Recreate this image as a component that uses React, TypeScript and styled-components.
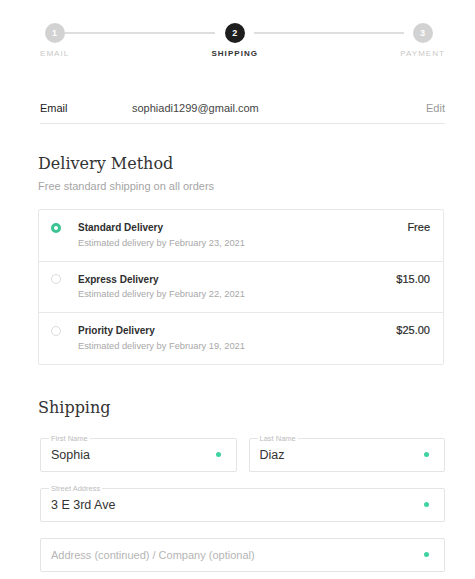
import React from "react";
import { styled, createGlobalStyle } from "styled-components";

const GlobalStyle = createGlobalStyle`
  body {
    margin: 0;
    background: #fff;
    font-family: "Liberation Sans", Arial, sans-serif;
    color: #222;
  }
`;

const Page = styled.div`
  width: 475px;
  box-sizing: border-box;
  padding: 23px 30px 0 38px;
`;

const Stepper = styled.div`
  display: flex;
  align-items: flex-start;
  padding-left: 2px;
`;

const Step = styled.div`
  display: flex;
  flex-direction: column;
  align-items: center;
  position: relative;
  z-index: 1;
`;

const StepCircle = styled.div<{ $active?: boolean }>`
  width: 20px;
  height: 20px;
  border-radius: 50%;
  background: ${(p) => (p.$active ? "#1e1e1e" : "#d2d2d2")};
  color: #fff;
  font-size: 9px;
  font-weight: 700;
  display: flex;
  align-items: center;
  justify-content: center;
`;

const StepLabel = styled.div<{ $active?: boolean }>`
  margin-top: 6px;
  font-size: 8px;
  line-height: 10px;
  letter-spacing: 1.05px;
  text-transform: uppercase;
  font-weight: ${(p) => (p.$active ? 700 : 400)};
  color: ${(p) => (p.$active ? "#333" : "#c9c9c9")};
`;

const Connector = styled.div`
  flex: 1;
  height: 2px;
  margin: 9px -4px 0;
  background: #dedede;
`;

const EmailRow = styled.div`
  display: flex;
  align-items: center;
  margin: 42px 0 0 2px;
  padding-bottom: 8px;
  border-bottom: 1px solid #e6e6e6;
  font-size: 11px;
  line-height: 14px;
`;

const EmailKey = styled.span`
  width: 92px;
  color: #222;
`;

const EmailValue = styled.span`
  flex: 1;
  color: #444;
`;

const EditLink = styled.span`
  color: #999;
`;

const SectionTitle = styled.h2<{ $gap: number }>`
  margin: ${(p) => p.$gap}px 0 0;
  font-family: "DejaVu Serif", Georgia, serif;
  font-weight: 400;
  font-size: 16px;
  line-height: 20px;
  color: #333;
`;

const SectionNote = styled.p`
  margin: 5px 0 0;
  font-size: 11px;
  line-height: 14px;
  color: #a5a5a5;
`;

const OptionCard = styled.div`
  margin: 16px 1px 0 0;
  border: 1px solid #e8e8e8;
  border-radius: 2px;
`;

const Option = styled.div`
  display: flex;
  align-items: flex-start;
  padding: 11px 13px 12px 12px;
  & + & {
    border-top: 1px solid #e8e8e8;
  }
`;

const Radio = styled.span<{ $checked?: boolean }>`
  width: 10px;
  height: 10px;
  box-sizing: border-box;
  border-radius: 50%;
  margin-top: 1.5px;
  border: ${(p) => (p.$checked ? "3px solid #3cc394" : "1px solid #dcdcdc")};
  background: #fff;
  flex-shrink: 0;
`;

const OptionText = styled.div`
  flex: 1;
  margin-left: 17px;
  display: flex;
  flex-direction: column;
  gap: 2.5px;
`;

const OptionName = styled.span`
  font-size: 10px;
  line-height: 13px;
  font-weight: 700;
  color: #2e2e2e;
`;

const OptionEta = styled.span`
  font-size: 9.3px;
  line-height: 12px;
  color: #a8a8a8;
`;

const OptionPrice = styled.span`
  font-size: 11px;
  line-height: 13px;
  color: #2a2a2a;
  -webkit-text-stroke: 0.2px #2a2a2a;
`;

const Fields = styled.div`
  margin: 20px 0 0 2px;
  display: grid;
  grid-template-columns: 1fr 1fr;
  column-gap: 12px;
  row-gap: 16px;
`;

const Field = styled.div<{ $wide?: boolean }>`
  position: relative;
  grid-column: ${(p) => (p.$wide ? "1 / -1" : "auto")};
  height: 34px;
  box-sizing: border-box;
  border: 1px solid #e4e4e4;
  border-radius: 2px;
  display: flex;
  align-items: center;
  padding: 0 15px 0 10px;
`;

const FloatLabel = styled.span`
  position: absolute;
  top: -5px;
  left: 8px;
  padding: 0 2px;
  background: #fff;
  font-size: 7.5px;
  line-height: 9px;
  color: #bdbdbd;
`;

const FieldValue = styled.span<{ $placeholder?: boolean }>`
  flex: 1;
  font-size: ${(p) => (p.$placeholder ? "11px" : "12.5px")};
  color: ${(p) => (p.$placeholder ? "#b5b5b5" : "#333")};
`;

const Dot = styled.span`
  width: 5px;
  height: 5px;
  border-radius: 50%;
  background: #3fd3a2;
`;

const steps = [
  { n: 1, label: "Email" },
  { n: 2, label: "Shipping", active: true },
  { n: 3, label: "Payment" },
];

const options = [
  { name: "Standard Delivery", eta: "February 23, 2021", price: "Free", checked: true },
  { name: "Express Delivery", eta: "February 22, 2021", price: "$15.00" },
  { name: "Priority Delivery", eta: "February 19, 2021", price: "$25.00" },
];

const fields = [
  { label: "First Name", value: "Sophia" },
  { label: "Last Name", value: "Diaz" },
  { label: "Street Address", value: "3 E 3rd Ave", wide: true },
  { value: "Address (continued) / Company (optional)", wide: true, placeholder: true },
];

export default function App() {
  return (
    <Page>
      <GlobalStyle />
      <Stepper>
        {steps.map((s, i) => (
          <React.Fragment key={s.n}>
            {i > 0 && <Connector />}
            <Step>
              <StepCircle $active={s.active}>{s.n}</StepCircle>
              <StepLabel $active={s.active}>{s.label}</StepLabel>
            </Step>
          </React.Fragment>
        ))}
      </Stepper>

      <EmailRow>
        <EmailKey>Email</EmailKey>
        <EmailValue>sophiadi1299@gmail.com</EmailValue>
        <EditLink>Edit</EditLink>
      </EmailRow>

      <SectionTitle $gap={30}>Delivery Method</SectionTitle>
      <SectionNote>Free standard shipping on all orders</SectionNote>

      <OptionCard>
        {options.map((o) => (
          <Option key={o.name}>
            <Radio $checked={o.checked} />
            <OptionText>
              <OptionName>{o.name}</OptionName>
              <OptionEta>Estimated delivery by {o.eta}</OptionEta>
            </OptionText>
            <OptionPrice>{o.price}</OptionPrice>
          </Option>
        ))}
      </OptionCard>

      <SectionTitle $gap={33}>Shipping</SectionTitle>

      <Fields>
        {fields.map((f) => (
          <Field key={f.value} $wide={f.wide}>
            {f.label && <FloatLabel>{f.label}</FloatLabel>}
            <FieldValue $placeholder={f.placeholder}>{f.value}</FieldValue>
            <Dot />
          </Field>
        ))}
      </Fields>
    </Page>
  );
}
